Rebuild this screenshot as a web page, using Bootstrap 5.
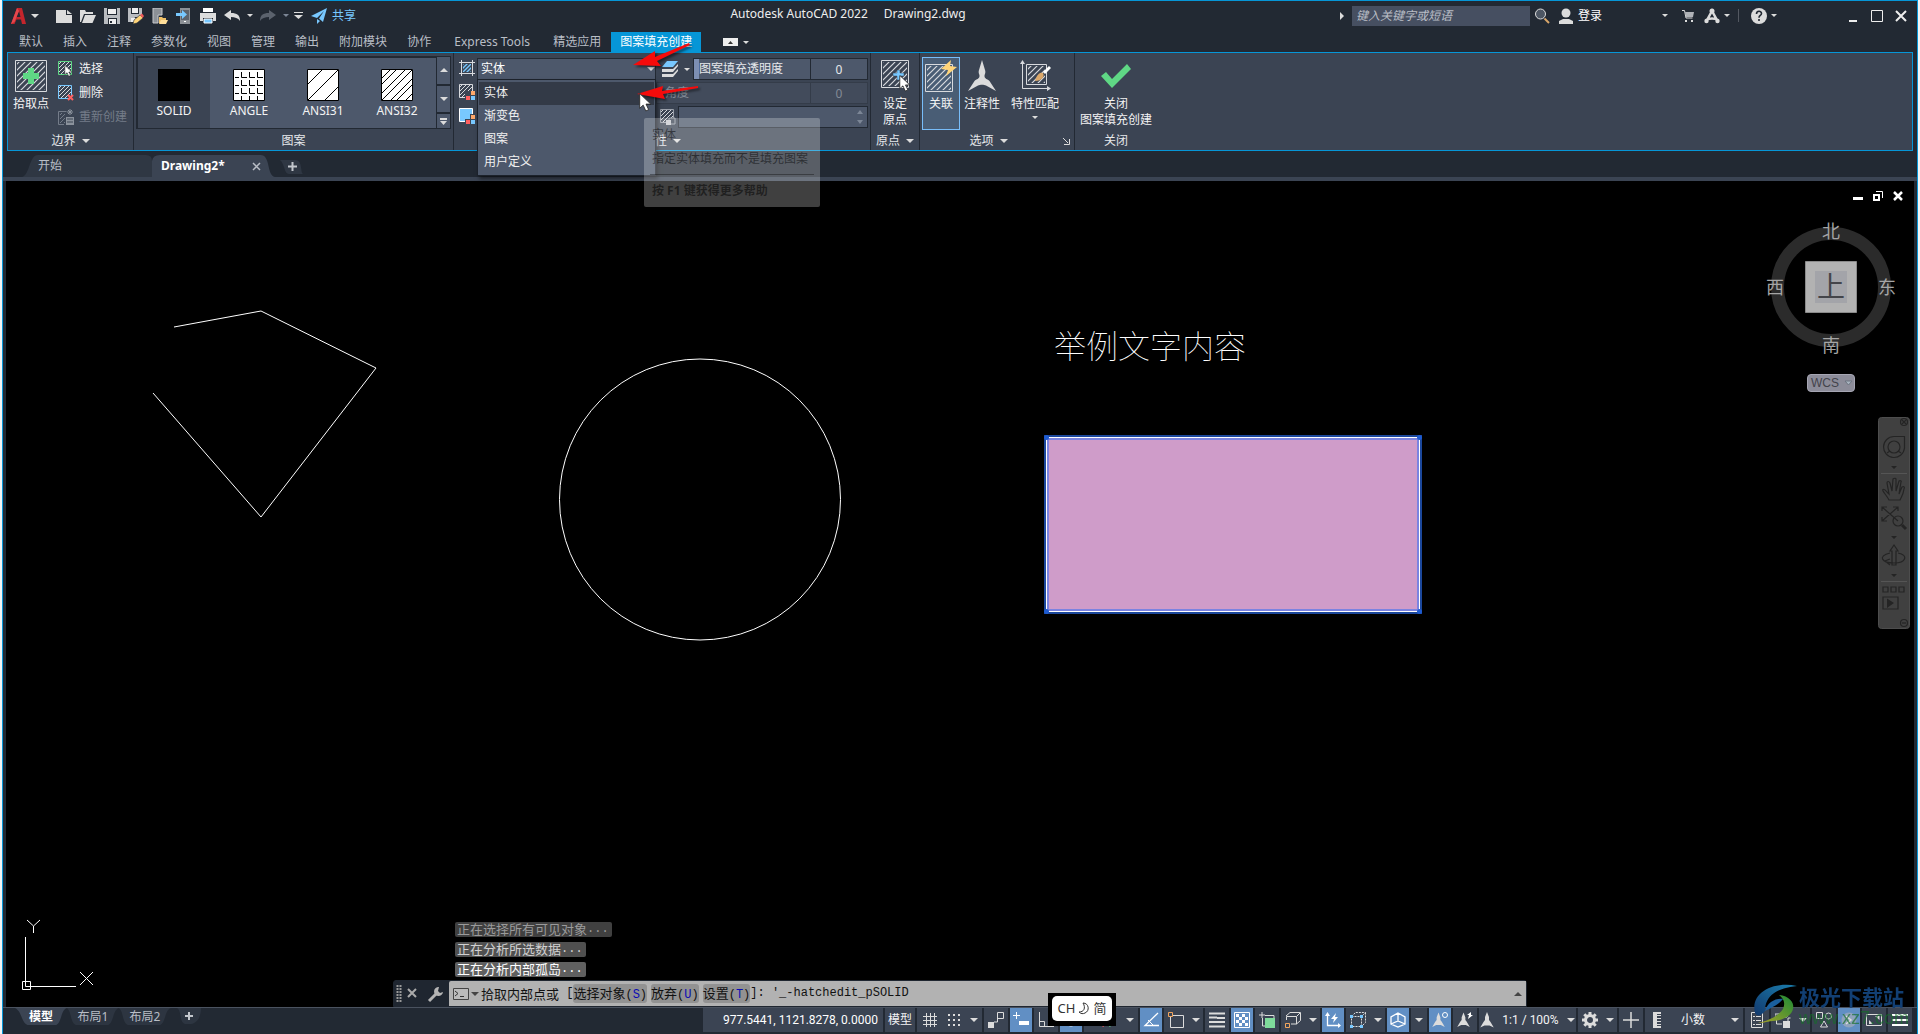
<!DOCTYPE html>
<html lang="zh-CN">
<head>
<meta charset="utf-8">
<meta name="viewport" content="width=device-width, initial-scale=1">
<title>Autodesk AutoCAD 2022 - Drawing2.dwg</title>
<link href="https://cdn.jsdelivr.net/npm/bootstrap@5.3.0/dist/css/bootstrap.min.css" rel="stylesheet">
<style>
:root{--chrome:#222933;--panel:#3b4453;--field:#4d586b;--blue:#0696d7;--ink:#e6e8eb;--edge:#222933}
html,body{height:100%}
body{background:#f3f5f6;color:var(--ink);font:12px/16px "Noto Sans","Noto Sans CJK SC",sans-serif;overflow:hidden}
svg{display:block;flex:none}
button,input,select{font:inherit;color:inherit;background:none;border:0;padding:0;margin:0;border-radius:0}
a{color:inherit;text-decoration:none}
.app{min-height:100vh;margin:0 2px;border:1px solid var(--blue);border-bottom:0;background:var(--chrome)}
.i16{width:16px;height:16px}.i28{width:28px;height:28px}.i32{width:32px;height:32px}.i12{width:12px;height:12px}
.tri{flex:none;width:0;height:0;border:4px solid transparent;border-top-color:#dcdcdc;border-bottom:0}
.tri-s{border-width:3px;border-bottom:0}
.tri-up{border-top:0;border-bottom:4px solid #dcdcdc}
.tri-dim{border-top-color:#7c8696}
.titlebar{height:29px}
.q{width:24px;height:24px;display:flex;align-items:center;justify-content:center}
.q-s{width:12px}
.app-title{font-size:12px;color:#eee;gap:16px;padding-bottom:3px}
.appmenu{width:49px}
.share{color:#78c8ff;gap:5px;padding-left:3px}
.find{width:178px;height:20px;background:#464f61;padding:0 4px;font-style:italic;color:#c3c7cd}
.find::placeholder{color:#b9bec6;opacity:1}
.login{width:114px}
.rtabs{height:22px;padding-left:6px}
.rtab{height:20px;padding:0 10px;color:#b9bec6;display:flex;align-items:center}
.rtab-w{width:102px}
.rtab.on{background:var(--blue);color:#fff;padding:0 9px}
.collapse-btn{width:15px;height:8px;background:#eee;margin:0 5px 0 22px}
.ribbon{margin:0 4px;border:1px solid var(--blue);background:var(--panel);height:99px}
.pane{border-right:1px solid var(--edge)}
.pane-body{height:79px;padding-top:4px}
.pane-title{height:18px;gap:6px}
.p-edge{width:126px}.p-pat{width:320px}.p-prop{width:417px}.p-org{width:49px}.p-opt{width:155px}.p-end{width:82px}
.p-opt .pane-body{padding-left:2px}
.bigb{display:flex;flex-direction:column;align-items:center;padding-top:3px;width:46px;color:#f3f3f3;white-space:nowrap;height:73px}
.bigb svg{margin-bottom:4px;height:32px}
.bigb.on{background:#495d75;border:1px solid #78bdf9;width:38px;padding-top:2px}
.smallb{display:flex;align-items:center;height:24px;gap:5px;color:#f3f3f3}
.smallb:disabled{color:#747c89}
.gal{background:var(--field);border:1px solid var(--edge);border-width:2px 1px 1px 2px;height:73px}
.gal button{width:74px;height:70px;color:#f3f3f3;display:flex;flex-direction:column;align-items:center;padding-top:11px;gap:2px}
.gal button.on{background:var(--panel);width:72px;margin-right:2px}
.galnav{width:14px;height:73px;border:1px solid var(--edge);border-left:0;gap:2px;background:var(--edge)}
.galnav button{background:var(--field);display:flex;flex-direction:column;align-items:center;justify-content:center}
.fld{background:var(--field);border:1px solid var(--edge);height:22px}
.fld select,.fld input{width:100%;height:20px;outline:0}
.fld select{appearance:none;padding-left:3px;color:#fff}
.fld.off{background:#424b5b;color:#828a96;border-color:#343c49}
.fld.num{width:57px;border-left:0}
.grab{width:5px;height:20px;background:#7d8fb3}
.layerb{width:37px;padding-left:6px;gap:6px}
.drop{left:23px;top:26px;width:179px;background:var(--field);border:1px solid #1c222b;z-index:5;padding:2px 1px 1px;box-shadow:2px 3px 4px rgba(0,0,0,.5);margin:0;list-style:none}
.drop button{display:block;width:100%;height:23px;text-align:left;padding:0 0 2px 5px;color:#f1f1f1}
.drop .on{background:#333a47}
.tip{left:190px;top:65px;width:176px;height:89px;background:rgba(255,255,255,.25);border-radius:2px;z-index:6;padding:9px 6px 0 8px;color:rgba(0,0,0,.5)}
.tip hr{margin:7px 0 8px -2px;border-color:#000;opacity:.35}
.over{z-index:7;left:170px;top:-20px}
.ftabs{height:26px;padding:4px 0 0 19px}
.ftab{position:relative;height:22px;display:flex;align-items:center;color:#b9bec6}
.ftab>svg.shape{position:absolute;left:0;top:0;width:100%;height:100%}
.ftab span{position:relative}
.strip{height:4px;background:var(--panel)}
.model{margin:0 3px;background:#000;overflow:hidden}
.cadtext{font:100 32px "Noto Sans CJK SC",sans-serif;fill:#fff}
.mdi{right:11px;top:10px;gap:10px}
.cube{right:17px;top:36px;width:132px;height:140px}
.cube text{font:18px "Noto Sans CJK SC",sans-serif;fill:#a5a5a5;text-anchor:middle}
.wcs{right:59px;top:193px;width:48px;height:18px;background:#8c8c99;border:1px solid #a6a6b3;border-radius:4px;font:12px/14px "Liberation Sans",sans-serif;color:#43434b;gap:5px;padding-left:3px}
.navb{right:4px;top:236px;width:32px;height:212px}
.cmd{left:387px;right:387px;bottom:0}
.hist{padding-left:62px;font-size:13px;line-height:15px;gap:5px}
.hist div{height:15px;border-radius:2px;padding:0 3px 0 2px;white-space:pre;display:flex;align-items:center}
.hist i,.cmdline i{font:12px/15px "Liberation Mono","Noto Sans CJK SC",monospace}
.h1c{background:#404040;color:#9a9a9a}.h2c{background:#505050;color:#d0d0d0}.h3c{background:#606060;color:#fff}
.cmdbar{height:27px;background:#1f2630;border:1px solid #1f2630;border-radius:3px 3px 0 0;margin-top:3px}
.cmdline{background:#b2b2b2;color:#111;font-size:13px;white-space:pre;padding-left:4px;border-radius:2px 0 0 0}
.cmdline button{background:#929292;border-radius:3px;line-height:18px}
.cmdline b{color:#0b0bb4;font-weight:400}
.cmdline .tri{border-top-color:#444;margin:0 2px}
.cmdline .tri-up{border-top:0;border-bottom-color:#444}
.status{border-top:1px solid #4a525f;height:27px}
.lays{padding-left:12px}
.lay{position:relative;width:52px;height:17px;color:#b9bec6}
.lay svg{position:absolute;inset:0}
.lay span{position:relative}
.tray{gap:2px;height:24px;padding-right:5px}
.s{flex:none;background:var(--panel);height:24px;width:24px;display:flex;align-items:center;justify-content:center;gap:8px;color:#f3f3f3;white-space:nowrap}
.s.on{background:#618fc4;width:22px}
.s.coord{width:180px;justify-content:flex-end;font:12px "Roboto","Noto Sans",sans-serif;color:#fff;padding-right:5px}
.s.w-txt{width:30px}
.s.w-grid{width:65px}
.s.w-snap{width:54px}
.s.w-pair{width:39px}
.s.w-caret{width:16px}
.s.w-scale{width:97px;font-family:"Roboto","Noto Sans",sans-serif}
.s.w-unit{width:98px;padding:0 4px 0 8px;gap:20px;justify-content:flex-start}
.ime{left:1048px;bottom:8px;background:#000;padding:3px 4px 5px;z-index:9}
.ime div{background:#fff;border-radius:5px;width:60px;height:25px;color:#333;font:13px/25px "Noto Sans","Noto Sans CJK SC",sans-serif;gap:3px}
.wm{right:11px;bottom:7px;z-index:10}
.wm-a{font:700 21px/26px "Noto Sans CJK SC",sans-serif;color:#123f73}
.wm-b{font:18px/18px "Liberation Sans",sans-serif;color:rgba(20,110,40,.65)}
</style>
<script src="https://cdn.jsdelivr.net/npm/bootstrap@5.3.0/dist/js/bootstrap.bundle.min.js"></script>
</head>
<body>
<svg width="0" height="0" class="position-absolute" aria-hidden="true">
<defs>
<pattern id="hp" width="4" height="4" patternUnits="userSpaceOnUse"><path d="M-1 1l2-2M0 4l4-4M3 5l2-2" stroke="#d8dade" stroke-width="1"/></pattern>
<pattern id="hb" width="4" height="4" patternUnits="userSpaceOnUse"><path d="M-1 1l2-2M0 4l4-4M3 5l2-2" stroke="#78c8ff" stroke-width="1.4"/></pattern>
<pattern id="hg" width="4" height="4" patternUnits="userSpaceOnUse"><path d="M-1 1l2-2M0 4l4-4M3 5l2-2" stroke="#747c89" stroke-width="1"/></pattern>
<pattern id="hl" width="6" height="6" patternUnits="userSpaceOnUse"><path d="M-1 1l2-2M0 6l6-6M5 7l2-2" stroke="#d8dade" stroke-width="1.200"/></pattern>
<symbol id="cur" viewBox="0 0 12 18"><path d="M.5.500v14l3.300-3 2.500 5.500 2.700-1.200-2.500-5.300h4.500z" fill="#fff" stroke="#222" stroke-width=".8"/></symbol>
<symbol id="ann" viewBox="0 0 28 32"><path d="M14 0l3 10c1 3-.5 4-.5 6 0 3 3 3 5 5l6.500 10-10-5.500c-2-1-6-1-8 0L0 31l6.500-10c2-2 5-2 5-5 0-2-1.500-3-.5-6z" fill="#dcdcdc"/></symbol>
<symbol id="annw" viewBox="0 0 28 32"><path d="M14 0l4 10v6l3 4 6.500 11-8.500-4h-10L.5 31 7 20l3-4v-6z" fill="#dcdcdc"/></symbol>
</defs>
</svg>

<div class="app d-flex flex-column">
<header class="titlebar d-flex align-items-center">
  <button class="appmenu d-flex align-items-center ps-2 gap-1" aria-label="应用程序菜单"><svg class="i16" viewBox="0 0 16 16"><path d="M0 16L6 0h5l4 16h-4l-1-4.500H5.500L3.500 16z" fill="#c4252c"/><path d="M8 3l1.500 6H5.500z" fill="#222933"/><path d="M6 0L0 16l3.500-2L8 3z" fill="#e5484d"/></svg><span class="tri"></span></button>
  <button class="q" aria-label="新建"><svg class="i16" viewBox="0 0 16 16"><path d="M0 2h10v5h6v8H0z" fill="#dcdcdc"/><path d="M11 2l5 4h-5z" fill="#dcdcdc"/></svg></button>
  <button class="q" aria-label="打开"><svg class="i16" viewBox="0 0 16 16"><path d="M0 2h5l1 2h7v2H4L1 14H0z" fill="#dcdcdc"/><path d="M5 7h11l-3.500 8H2z" fill="#dcdcdc"/></svg></button>
  <button class="q" aria-label="保存"><svg class="i16" viewBox="0 0 16 16"><path d="M0 0h16v16H0z" fill="#b9bcc0"/><path d="M3 0h10v7H3zM4 10h9v6H4z" fill="#222933"/><path d="M4 1h8v5H4zM5 11h7v5H5z" fill="#eee"/><path d="M6 13h2v2H6z" fill="#222933"/></svg></button>
  <button class="q" aria-label="另存为"><svg class="i16" viewBox="0 0 16 16"><path d="M0 0h14v9H7l-2 5H0z" fill="#b9bcc0"/><path d="M3 0h8v6H3z" fill="#222933"/><path d="M4 0h6v5H4zM3 10h5l-2 4H3z" fill="#eee"/><path d="M6 12l6-5 3 3-6 5-4 1z" fill="#ffd479" stroke="#222933" stroke-width=".6"/><path d="M12 7l2-1.500 2 2.500-1.500 2z" fill="#f45b5b"/></svg></button>
  <button class="q" aria-label="从移动设备打开"><svg class="i16" viewBox="0 0 16 16"><path d="M1 0h9v7H6v8H1z" fill="#8c9096" stroke="#c8cacd"/><path d="M7 9h3l1 1h3v5H7z" fill="#f0c067"/><path d="M9 12h7l-2 4H7z" fill="#ffdf9a"/></svg></button>
  <button class="q" aria-label="保存到移动设备"><svg class="i16" viewBox="0 0 16 16"><path d="M4 0h10v16H4z" fill="#8c9096"/><path d="M5 2h8v10H5z" fill="#5c626c"/><path d="M0 5h6V2l5 4.500L6 11V8H0z" fill="#78c8ff"/><path d="M8 13h2v1H8z" fill="#fff"/></svg></button>
  <button class="q" aria-label="打印"><svg class="i16" viewBox="0 0 16 16"><path d="M3 0h10v4H3z" fill="#fff"/><path d="M0 5h16v8h-3v-3H3v3H0z" fill="#dcdcdc"/><path d="M4 11h8v4H4z" fill="#78c8ff" stroke="#fff"/></svg></button>
  <button class="q" aria-label="放弃"><svg class="i16" viewBox="0 0 16 16"><path d="M0 7l7-5v3c6 0 9 2 9 8-2-3-5-4-9-4v3z" fill="#dcdcdc"/></svg></button>
  <button class="q q-s" aria-label="放弃列表"><span class="tri tri-s"></span></button>
  <button class="q" aria-label="重做"><svg class="i16" viewBox="0 0 16 16"><path d="M16 7L9 2v3C3 5 0 7 0 13c2-3 5-4 9-4v3z" fill="#5b626d"/></svg></button>
  <button class="q q-s" aria-label="重做列表"><span class="tri tri-s tri-dim"></span></button>
  <button class="q q-s" aria-label="自定义"><svg width="9" height="7" viewBox="0 0 9 7"><path d="M0 0h9v1H0zM0 3h9L4.500 7z" fill="#dcdcdc"/></svg></button>
  <button class="share d-flex align-items-center ms-1"><svg class="i16" viewBox="0 0 16 16"><path d="M0 8L16 0l-4 14-4-3.500 5-7.500-7 7z" fill="#78c8ff"/><path d="M6 11l3 2-3 3z" fill="#78c8ff"/></svg>共享</button>
  <div class="app-title flex-grow-1 d-flex justify-content-center"><span>Autodesk AutoCAD 2022</span><span>Drawing2.dwg</span></div>
  <svg class="me-2" width="4" height="8"><path d="M0 0l4 4-4 4z" fill="#dcdcdc"/></svg>
  <input class="find" type="text" placeholder="键入关键字或短语" aria-label="搜索">
  <button class="q" aria-label="查找"><svg class="i16" viewBox="0 0 16 16"><circle cx="6.500" cy="6" r="5" fill="#4d5663" stroke="#dcdcdc"/><path d="M10.500 10.500L15 15" stroke="#d9a66a" stroke-width="2"/></svg></button>
  <button class="login d-flex align-items-center gap-1 ps-1"><svg class="i16" viewBox="0 0 16 16"><circle cx="8" cy="5" r="4.500" fill="#dcdcdc"/><path d="M1 16v-3l4-2h6l4 2v3z" fill="#dcdcdc"/></svg><span class="text-white flex-grow-1 text-start">登录</span><span class="tri tri-s"></span></button>
  <button class="q ms-2" aria-label="应用商店"><svg class="i12" viewBox="0 0 12 12"><path d="M0 .5h2.500L4 8h6.500" stroke="#dcdcdc" fill="none"/><path d="M3 2h9l-1 5H4z" fill="#b0b3b8"/><path d="M3 10h2v2H3zM9 10h2v2H9z" fill="#dcdcdc"/></svg></button>
  <button class="q" aria-label="Autodesk App"><svg class="i16" viewBox="0 0 16 16"><path d="M2.500 13L8 3l5.500 10M2 12c4-2 8-2 12 0" stroke="#dcdcdc" stroke-width="2.500" fill="none"/><circle cx="2.500" cy="13" r="2.200" fill="#dcdcdc"/><circle cx="13.500" cy="13" r="2.200" fill="#dcdcdc"/><circle cx="8" cy="3" r="2.500" fill="#dcdcdc"/></svg></button>
  <span class="tri tri-s"></span><span class="vr ms-2 me-2 my-2"></span>
  <button class="q" aria-label="帮助"><svg class="i16" viewBox="0 0 16 16"><circle cx="8" cy="8" r="8" fill="#dcdcdc"/><path d="M5.500 6c0-3.500 5-3.500 5-.5 0 2-2.500 2-2.500 4.200M8 11v2" stroke="#222933" stroke-width="1.600" fill="none"/></svg></button>
  <span class="tri tri-s me-5"></span>
  <button class="q ms-3" aria-label="最小化"><svg class="i12" viewBox="0 0 12 12"><path d="M2 10h8v2H2z" fill="#eee"/></svg></button>
  <button class="q" aria-label="最大化"><svg class="i12" viewBox="0 0 12 12"><path d="M.5.500h11v11H.5z" stroke="#eee" fill="none"/></svg></button>
  <button class="q me-1" aria-label="关闭"><svg class="i12" viewBox="0 0 12 12"><path d="M1 1l10 10M11 1L1 11" stroke="#eee" stroke-width="2"/></svg></button>
</header>

<nav class="rtabs d-flex align-items-end" aria-label="功能区选项卡">
  <a class="rtab" href="#">默认</a><a class="rtab" href="#">插入</a><a class="rtab" href="#">注释</a><a class="rtab" href="#">参数化</a><a class="rtab" href="#">视图</a><a class="rtab" href="#">管理</a><a class="rtab" href="#">输出</a><a class="rtab" href="#">附加模块</a><a class="rtab" href="#">协作</a><a class="rtab rtab-w justify-content-center" href="#">Express Tools</a><a class="rtab" href="#">精选应用</a><a class="rtab on" href="#">图案填充创建</a>
  <div class="d-flex align-items-center" style="height:20px"><button class="collapse-btn d-flex align-items-center justify-content-center" aria-label="折叠功能区"><svg width="5" height="3"><path d="M0 3l2.500-3L5 3z" fill="#333"/></svg></button><span class="tri tri-s"></span></div>
</nav>

<section class="ribbon d-flex" aria-label="图案填充创建">
  <div class="pane p-edge">
    <div class="pane-body d-flex">
      <button class="bigb"><svg class="i32" viewBox="0 0 32 32"><path d="M.5.500h31v31H.5z" fill="none" stroke="#d8dade"/><path d="M2 2h28v28H2z" fill="url(#hl)"/><path d="M13 8h6v5h5v6h-5v5h-6v-5H8v-6h5z" fill="#5fd885"/></svg>拾取点</button>
      <div class="ps-1">
        <button class="smallb"><svg class="i16" viewBox="0 0 16 16"><path d="M.5.500h13v13H.5z" fill="url(#hp)" stroke="#5fd885"/><use href="#cur" x="6" y="4" width="9" height="12"/></svg>选择</button>
        <button class="smallb"><svg class="i16" viewBox="0 0 16 16"><path d="M.5.500h13v13H.5z" fill="url(#hp)" stroke="#78c8ff"/><path d="M10 10l5 5M15 10l-5 5" stroke="#ff5f5f" stroke-width="2"/></svg>删除</button>
        <button class="smallb" disabled><svg class="i16" viewBox="0 0 16 16"><path d="M.5 2.500h8M.5 2.500v13H6" fill="none" stroke="#747c89"/><path d="M2 4h5v10H2z" fill="url(#hg)"/><path d="M8 8h8v8H8z" fill="#8b929c"/><path d="M9 10h6M9 13h6" stroke="#3b4453"/><path d="M12 0v6M9 3h6M10 1l4 4M14 1l-4 4" stroke="#8b929c"/></svg>重新创建</button>
      </div>
    </div>
    <div class="pane-title d-flex align-items-center justify-content-center">边界<span class="tri"></span></div>
  </div>

  <div class="pane p-pat">
    <div class="pane-body d-flex" style="padding:3px 2px 0">
      <div class="gal d-flex flex-grow-1">
        <button class="on"><svg class="i32"><path d="M0 0h32v32H0z"/></svg>SOLID</button>
        <button><svg class="i32" viewBox="0 0 32 32"><path d="M.5.500h31v31H.5z" fill="#fff" stroke="#000"/><path d="M2 8.500h4M8.500 3v5.500H14M16.500 3v5.500H22M24.500 3v5.500H30M2 16.500h4M8.500 11v5.500H14M16.500 11v5.500H22M24.500 11v5.500H30M2 24.500h4M8.500 19v5.500H14M16.500 19v5.500H22M24.500 19v5.500H30M8.500 27v4M16.500 27v4M24.500 27v4" fill="none" stroke="#000"/></svg>ANGLE</button>
        <button><svg class="i32" viewBox="0 0 32 32"><path d="M.5.500h31v31H.5z" fill="#fff" stroke="#000"/><path d="M1 15L15 1M1 31L31 1M18 31l13-13" stroke="#000"/></svg>ANSI31</button>
        <button><svg class="i32" viewBox="0 0 32 32"><path d="M.5.500h31v31H.5z" fill="#fff" stroke="#000"/><path d="M1 9l8-8M1 15L15 1M1 24L24 1M1 31L31 1M10 31l21-21M16 31l15-15M25 31l6-6" stroke="#000"/></svg>ANSI32</button>
      </div>
      <div class="galnav d-flex flex-column">
        <button class="flex-grow-1" aria-label="上一行"><span class="tri tri-up"></span></button>
        <button class="flex-grow-1" aria-label="下一行"><span class="tri"></span></button>
        <button style="height:14px" aria-label="更多图案"><svg width="7" height="7"><path d="M0 0h7v2H0zM0 3h7L3.500 7z" fill="#dcdcdc"/></svg></button>
      </div>
    </div>
    <div class="pane-title d-flex align-items-center justify-content-center">图案</div>
  </div>

  <div class="pane p-prop position-relative">
    <div class="pane-body d-flex">
      <div class="d-flex flex-column" style="padding:3px 2px 0 5px;gap:8px">
        <svg class="i16" viewBox="0 0 16 16"><path d="M2.500 0v16M13.500 0v16M0 2.500h16M0 13.500h16" stroke="#d8dade"/><path d="M4 4h8v8H4z" fill="url(#hb)"/></svg>
        <svg class="i16" viewBox="0 0 16 16"><path d="M.5.500h13v13H.5z" fill="url(#hp)" stroke="#d8dade"/><path d="M6 7h10v9H6z" fill="#3b4453"/><path d="M12 7h4v4h-4z" fill="#ffa869"/><path d="M7 12h4v4H7z" fill="#ff5f5f"/><path d="M12 12h4v4h-4z" fill="#78c8ff"/></svg>
        <svg class="i16" viewBox="0 0 16 16"><path d="M.5.500h13v13H.5z" fill="#78c8ff" stroke="#fff"/><path d="M11 6h5v10H6v-5h5z" fill="#3b4453"/><path d="M12 7h4v4h-4z" fill="#ffa869"/><path d="M7 12h4v4H7z" fill="#ff5f5f"/><path d="M12 12h4v4h-4z" fill="#78c8ff"/></svg>
      </div>
      <div style="width:179px;padding-top:1px">
        <div class="fld position-relative d-flex align-items-center"><select aria-label="图案填充类型"><option>实体</option><option>渐变色</option><option>图案</option><option>用户定义</option></select><span class="tri position-absolute end-0"></span></div>
      </div>
      <div class="flex-grow-1 d-flex flex-column" style="padding:1px 2px 0 0;gap:2px">
        <div class="d-flex"><button class="layerb d-flex align-items-center" aria-label="图层"><svg class="i16" viewBox="0 0 16 16"><path d="M5 0h11l-5 6H0z" fill="#78c8ff"/><path d="M0 8h11l5-5v2l-5 6H0zM0 13h11l5-5v2l-5 6H0z" fill="#dcdcdc"/></svg><span class="tri tri-s"></span></button>
          <label class="fld flex-grow-1 d-flex align-items-center" for="tr"><span class="grab"></span>图案填充透明度</label><div class="fld num"><input id="tr" class="text-center" value="0"></div></div>
        <div class="d-flex"><label class="fld off flex-grow-1 ps-2 d-flex align-items-center" for="an">角度</label><div class="fld off num"><input id="an" class="text-center" value="0" disabled></div></div>
        <div class="d-flex align-items-center" style="padding-left:4px;gap:2px"><svg class="i16" viewBox="0 0 16 16"><path d="M.5.500h13v13H.5z" fill="url(#hp)" stroke="#9aa0aa"/><path d="M9 9h6v6H9z" fill="#3b4453" stroke="#9aa0aa"/><path d="M6 11h5v5H6z" fill="#c4c7cc"/></svg><div class="fld flex-grow-1 d-flex align-items-center pe-1"><input aria-label="图案填充比例"><svg width="6" height="14"><path d="M0 4l3-4 3 4zM0 10l3 4 3-4z" fill="#7c8696"/></svg></div></div>
      </div>
    </div>
    <div class="pane-title d-flex align-items-center justify-content-center">特性<span class="tri"></span></div>
    <ul class="drop position-absolute"><li><button class="on">实体</button></li><li><button>渐变色</button></li><li><button>图案</button></li><li><button>用户定义</button></li></ul>
    <div class="tip position-absolute" role="tooltip">实体<div class="mt-2">指定实体填充而不是填充图案</div><hr><strong>按 F1 键获得更多帮助</strong></div>
    <svg class="over position-absolute" width="90" height="80" viewBox="0 0 90 80" aria-hidden="true">
      <g style="filter:drop-shadow(2px 2px 1px rgba(0,0,0,.5))" fill="#f50b0b"><path d="M9 32l22-14 0 6L65 10l1 2L33 28l4 5z"/><path d="M13 61l26-8-1 5 36-5v2l-35 6 2 5z"/></g>
      <use href="#cur" x="15" y="60" width="13" height="19"/>
    </svg>
  </div>

  <div class="pane p-org">
    <div class="pane-body"><button class="bigb mx-auto"><svg class="i32" viewBox="0 0 32 32"><path d="M2.500.500h27v27h-27z" fill="none" stroke="#d8dade"/><path d="M4 2h24v24H4z" fill="url(#hl)"/><path d="M18 10h3v3h4v3h-4v4h-3v-4h-4v-3h4z" fill="#78c8ff" stroke="#3b4453" stroke-width=".5"/><use href="#cur" x="20" y="15" width="12" height="17"/></svg>设定<br>原点</button></div>
    <div class="pane-title d-flex align-items-center justify-content-center">原点<span class="tri"></span></div>
  </div>

  <div class="pane p-opt">
    <div class="pane-body d-flex">
      <button class="bigb on"><svg class="i32" viewBox="0 0 32 32"><path d="M.5 4.500h27v27H.5z" fill="none" stroke="#d8dade"/><path d="M2 6h24v24H2z" fill="url(#hl)"/><path d="M26 0L16 9l7 1-2 6 11-9-7-1z" fill="#ffd479"/></svg>关联</button>
      <button class="bigb" style="width:44px"><svg class="i28" viewBox="0 0 28 32"><use href="#ann"/></svg>注释性</button>
      <button class="bigb flex-grow-1 pe-2"><svg class="i32" viewBox="0 0 32 32"><path d="M3.500 2v26.500H30" stroke="#d8dade" fill="none"/><path d="M1 4l2.500-4L6 4zM28 26l4 2.500-4 2.500z" fill="#d8dade"/><path d="M7.500 4.500h20v20h-20z" fill="none" stroke="#d8dade"/><path d="M9 6h17v17H9z" fill="url(#hl)"/><path d="M16 21c2-7 5-9 8-8 2 3-1 8-8 8z" fill="#dca96b"/><path d="M24 12l6-6 2 2-6 6z" fill="#fff"/></svg>特性匹配<span class="tri tri-s mt-1"></span></button>
    </div>
    <div class="pane-title d-flex align-items-center"><span class="flex-grow-1"></span><span>选项</span><span class="tri"></span><span class="flex-grow-1"></span><button class="me-1" aria-label="选项设置"><svg width="7" height="7"><path d="M0 0l5 5M6.500 1v5.500H1" stroke="#dcdcdc" fill="none"/></svg></button></div>
  </div>

  <div class="p-end">
    <div class="pane-body"><button class="bigb mx-auto"><svg class="i32" viewBox="0 0 32 32"><path d="M1 16l5-4 6 7L27 4l4 5-19 19z" fill="#5fd885"/></svg>关闭<br>图案填充创建</button></div>
    <div class="pane-title d-flex align-items-center justify-content-center">关闭</div>
  </div>
</section>

<div class="ftabs d-flex">
  <button class="ftab" style="width:130px;padding-left:16px"><svg class="shape" viewBox="0 0 130 22" preserveAspectRatio="none"><path d="M0 22C8 20 7 0 16 0h108q6 0 6 6v16z" fill="#2f3743"/></svg><span>开始</span></button>
  <button class="ftab text-white" style="width:123px;padding-left:9px"><svg class="shape" viewBox="0 0 126 22" preserveAspectRatio="none"><path d="M0 22V6Q1 0 8 0h103c11 0 6 20 15 22z" fill="#3b4453"/></svg><span class="fw-bold">Drawing2*</span><svg class="position-relative ms-auto" style="margin-right:14px" width="9" height="9"><path d="M1 1l7 7M8 1L1 8" stroke="#b9bec6" stroke-width="1.500"/></svg></button>
  <button class="ftab ms-1 justify-content-center" style="width:26px" aria-label="新图形"><svg class="shape" viewBox="0 0 26 22"><path d="M1 5h15c8 0 5 12 8 14H10C5 19 6 9 1 5z" fill="#2f3743"/></svg><svg class="position-relative" width="9" height="9"><path d="M3.500 0h2v3.500H9v2H5.500V9h-2V5.500H0v-2h3.500z" fill="#c3c7cd"/></svg></button>
</div>
<div class="strip"></div>

<main class="model flex-grow-1 position-relative">
  <svg class="position-absolute top-0 start-0 w-100 h-100" role="img" aria-label="图形">
    <g transform="translate(-6 -181)" fill="none" stroke="#fff">
      <path d="M174 327l87-16 115 57-115 149-108-124"/>
      <circle cx="700" cy="499.500" r="140.500"/>
      <path d="M1046.500 437.500h373v174h-373z" fill="#cf9cc9"/>
      <path d="M1045.500 436.500h375v176h-375z" stroke="#1b479b" stroke-width="3"/>
      <path d="M1048 439h370v171h-370z" stroke="#7b83e0" stroke-width="2"/>
      <path d="M1046.500 437.500h373v174h-373z"/>
      <g fill="#1e5bd0" stroke="none"><circle cx="1046.500" cy="437.500" r="2.500"/><circle cx="1419.500" cy="437.500" r="2.500"/><circle cx="1046.500" cy="611.500" r="2.500"/><circle cx="1419.500" cy="611.500" r="2.500"/></g>
      <text class="cadtext" x="1054" y="358" stroke="none">举例文字内容</text>
    </g>
  </svg>
  <svg class="position-absolute bottom-0 start-0" width="100" height="100" aria-label="UCS"><g transform="translate(-6 -907)" stroke="#fff" fill="none"><path d="M25.500 937v49.500H76M22.500 981.500h8v8h-8zM27 920l6.500 6 6.500-6M33.500 926v7M80 972l13 13M93 972l-13 13"/></g></svg>

  <div class="mdi position-absolute d-flex align-items-end">
    <button aria-label="最小化图形"><svg width="10" height="10"><path d="M0 6h10v3H0z" fill="#fff"/></svg></button>
    <button aria-label="还原图形"><svg width="10" height="10"><path d="M1 4h5v5H1z" stroke="#fff" stroke-width="2" fill="none"/><path d="M3 .5h6.500V7" stroke="#fff" fill="none"/></svg></button>
    <button aria-label="关闭图形"><svg width="10" height="10"><path d="M1 1l8 8M9 1L1 9" stroke="#fff" stroke-width="2.500"/></svg></button>
  </div>

  <svg class="cube position-absolute" viewBox="0 0 132 140" aria-label="ViewCube">
    <circle cx="66" cy="70" r="53.500" fill="none" stroke="#2b2b2b" stroke-width="13"/>
    <path d="M40.500 44.500h51v51h-51z" fill="#b2b2b2" stroke="#8a8a8a"/><path d="M50 54h32v32H50z" fill="#a3a4a9"/>
    <text x="66" y="21">北</text><text x="10" y="77">西</text><text x="122" y="77">东</text><text x="66" y="135">南</text>
    <text x="66" y="80" style="font-size:28px;fill:#44454a">上</text>
  </svg>
  <button class="wcs position-absolute d-flex align-items-center">WCS<svg width="9" height="6"><path d="M1 1h7L4.500 5z" fill="#a8b4c0" stroke="#6d7480"/></svg></button>

  <svg class="navb position-absolute" viewBox="0 0 32 212" aria-label="导航栏"><rect x=".5" y=".5" width="31" height="211" rx="3" fill="#404040" stroke="#4d4d4d"/><path d="M3 56.500h26M3 164.500h26" stroke="#555"/>
    <g fill="none" stroke="#242424" stroke-width="1.200"><circle cx="26" cy="5" r="3.500"/><path d="M24 3l4 4M28 3l-4 4"/><path d="M16 19.500h10.500V31A10.500 10.500 0 1 1 16 19.500z"/><circle cx="16" cy="30" r="6"/><path d="M9 36l3-2M23 36l-3-2"/>
    <path d="M11 83c-2-4-5-7-6-9s1-3 4 1l2 2-2-11c0-2 2-2 3 0l2 8 1-12c1-1 3-1 3 0v12l3-10c1-1 3 0 2 1l-2 12 3-7c2-1 3 0 2 2-1 7-3 8-4 11z"/>
    <path d="M4 90l16 14M20 90L4 104M4 94v-4h5M15 90h5v4M4 100v4h5"/><circle cx="20" cy="104" r="5"/><path d="M24 108l4 4" stroke-width="3"/>
    <path d="M14 148v-14h-2l4-6 4 6h-2v14z"/><path d="M12 136c-13 3-8 10 4 10s15-8 4-10M12 142l-5 2 5 4"/>
    <path d="M5 170h5v5H5zM13 170h5v5h-5zM21 170h5v5h-5zM5 180h15v12H5z"/><circle cx="26" cy="206" r="3.500"/><path d="M24 206h4"/></g>
    <path d="M9 181.500l7 4.500-7 5zM13 49h6l-3 3zM13 119h6l-3 3zM13 157h6l-3 3z" fill="#242424"/></svg>

  <div class="cmd position-absolute">
    <div class="hist d-flex flex-column align-items-start"><div class="h1c">正在选择所有可见对象<i>...</i></div><div class="h2c">正在分析所选数据<i>...</i></div><div class="h3c">正在分析内部孤岛<i>...</i></div></div>
    <div class="cmdbar d-flex">
      <svg width="55" height="25" viewBox="0 0 55 25"><path d="M3.500 4v17M6.500 4v17" stroke="#999" stroke-width="2" stroke-dasharray="2 1"/><path d="M14 8l8 8M22 8l-8 8" stroke="#aaa" stroke-width="2"/><path d="M35 20l8-8" stroke="#b5b5b5" stroke-width="3"/><path d="M45 6a4.500 4.500 0 1 0 4 5l-3 1-2-2z" fill="#b5b5b5"/></svg>
      <div class="cmdline flex-grow-1 d-flex align-items-center"><svg width="16" height="12" viewBox="0 0 16 12"><path d="M.5.500h15v11H.5z" fill="#bbb" stroke="#444"/><path d="M2 3l3 2.500L2 8M7 8.500h4" stroke="#333" fill="none"/></svg><span class="tri"></span>拾取内部点或<i> [</i><button>选择对象<i>(<b>S</b>)</i></button><i class="ms-1"></i><button>放弃<i>(<b>U</b>)</i></button><i class="ms-1"></i><button>设置<i>(<b>T</b>)</i></button><i>]: '_-hatchedit_pSOLID</i><span class="tri tri-up ms-auto me-1"></span></div>
    </div>
  </div>
</main>

<footer class="status d-flex">
  <div class="lays d-flex">
    <button class="lay text-white fw-bold"><svg viewBox="0 0 54 18"><path d="M0 0h54c-7 2-5 16-12 18H14C6 16 8 4 0 0z" fill="#3b4453"/></svg><span>模型</span></button>
    <button class="lay"><svg viewBox="0 0 54 18"><path d="M0 0h54c-7 2-5 16-12 18H10C3 16 5 4 0 0z" fill="#2d3541"/></svg><span>布局1</span></button>
    <button class="lay"><svg viewBox="0 0 54 18"><path d="M0 0h54c-7 2-5 16-12 18H10C3 16 5 4 0 0z" fill="#2d3541"/></svg><span>布局2</span></button>
    <button class="lay" aria-label="新布局"><svg width="34" height="18"><path d="M6 0h24c0 8-3 15-10 16h-6C8 14 11 3 6 0z" fill="#2d3541"/><path d="M17 4h2v3h3v2h-3v3h-2V9h-3V7h3z" fill="#c3c7cd"/></svg></button>
  </div>
  <div class="tray d-flex ms-auto">
    <button class="s coord">977.5441, 1121.8278, 0.0000</button>
    <button class="s w-txt">模型</button>
    <div class="s w-grid"><svg class="i16" viewBox="0 0 16 16"><path d="M4.500 1v14M8.500 1v14M12.500 1v14M1 4.500h14M1 8.500h14M1 12.500h14" stroke="#dcdcdc"/></svg><svg class="i16" viewBox="0 0 16 16"><path d="M2 3h12M2 8h12M2 13h12" stroke="#dcdcdc" stroke-width="2" stroke-dasharray="2 3"/></svg><span class="tri"></span></div>
    <button class="s" aria-label="推断约束"><svg class="i16" viewBox="0 0 16 16"><path d="M0 10h6v6H0z" fill="#dcdcdc"/><path d="M9.500.500h6v6h-6zM9.500 5v5H6" stroke="#dcdcdc" fill="none"/></svg></button>
    <button class="s on" aria-label="动态输入"><svg class="i16" viewBox="0 0 16 16"><path d="M3.500 0v7M0 3.500h7" stroke="#fff"/><path d="M6 9h10v4H6z" fill="#fff"/></svg></button>
    <button class="s" aria-label="正交"><svg class="i16" viewBox="0 0 16 16"><path d="M1.500 0v14.500H16M1.500 9.500h5v5" stroke="#dcdcdc" fill="none"/></svg></button>
    <button class="s on" aria-label="极轴"><svg class="i16" viewBox="0 0 16 16"><circle cx="8" cy="9" r="5" stroke="#fff" fill="none"/></svg></button>
    <div class="s w-snap justify-content-end pe-1"><svg class="i16" viewBox="0 0 16 16"><path d="M1 15l2-9" stroke="#ff5f5f"/><path d="M8 15L6 6" stroke="#5fd885"/></svg><span class="tri"></span></div>
    <button class="s on" aria-label="对象捕捉追踪"><svg class="i16" viewBox="0 0 16 16"><path d="M15 1L2 13.500h14" stroke="#fff" fill="none" stroke-width="1.300"/><path d="M5 8l6 6" stroke="#fff"/></svg></button>
    <div class="s w-pair"><svg class="i16" viewBox="0 0 16 16"><path d="M2.500 3.500h13v12h-13z" stroke="#dcdcdc" fill="none"/><path d="M.5.500h4v4h-4z" fill="#3b4453" stroke="#f2a65e"/></svg><span class="tri"></span></div>
    <button class="s" aria-label="线宽"><svg class="i16" viewBox="0 0 16 16"><path d="M0 1.500h16M0 5.500h8M8 6h8M0 10h16M0 14.500h16" stroke="#dcdcdc" stroke-width="2"/></svg></button>
    <button class="s on" aria-label="透明度"><svg class="i16" viewBox="0 0 16 16"><path d="M.5.500h15v15H.5z" stroke="#fff" fill="none"/><path d="M2 2h3v3H2zM8 2h3v3H8zM5 5h3v3H5zM11 5h3v3h-3zM2 8h3v3H2zM8 8h3v3H8zM5 11h3v3H5zM11 11h3v3h-3z" fill="#fff"/></svg></button>
    <button class="s" aria-label="选择循环"><svg class="i16" viewBox="0 0 16 16"><path d="M3 0v6M0 3h6M3.500 6v8H6M6 3.500h9V6" stroke="#dcdcdc" fill="none"/><path d="M6 6h10v10H6z" fill="#7fdb9b"/></svg></button>
    <div class="s w-pair"><svg class="i16" viewBox="0 0 16 16"><path d="M1 4l4-3.500h10.500v8l-4 3.500H6M1.500 8V4.500h10V12M11.500 4.500L15 1" stroke="#dcdcdc" fill="none"/><path d="M.5 11.500h4v4h-4z" stroke="#f2a65e" fill="none"/></svg><span class="tri"></span></div>
    <button class="s on" aria-label="动态UCS"><svg class="i16" viewBox="0 0 16 16"><path d="M2.500 2v11.500H15" stroke="#fff" fill="none" stroke-width="1.300"/><path d="M0 4l2.500-4L5 4zM13 11l3 2.500-3 2.500zM11 1L6 7h3l-1 4 5-6h-3z" fill="#fff"/></svg></button>
    <div class="s w-pair"><svg class="i16" viewBox="0 0 16 16"><path d="M1.500 4.500h10v10h-10zM1.500 4.500l4-4h10l-4 4M15.500.500v10l-4 4" stroke="#dcdcdc" fill="none" stroke-dasharray="2 1"/><path d="M0 3h3v3H0zM10 3h3v3h-3zM0 13h3v3H0zM10 13h3v3h-3z" fill="#78c8ff"/></svg><span class="tri"></span></div>
    <button class="s on" aria-label="小控件"><svg class="i16" viewBox="0 0 16 16"><path d="M8 1l7 4v7l-7 3-7-3V5zM8 1v8M1 12l7-3 7 3" stroke="#fff" fill="none" stroke-width="1.300"/></svg></button>
    <button class="s w-caret" aria-label="小控件列表"><span class="tri"></span></button>
    <button class="s on" aria-label="注释可见性"><svg class="i16" viewBox="0 0 16 16"><use href="#annw" x="0" y="0" width="13" height="16"/><circle cx="13" cy="3" r="2.500" stroke="#fff" fill="none"/></svg></button>
    <button class="s" aria-label="自动缩放"><svg class="i16" viewBox="0 0 16 16"><use href="#annw" x="0" y="0" width="13" height="16"/><path d="M14 0l-4 3h2l-1 4 5-4h-2z" fill="#fff"/></svg></button>
    <button class="s w-scale"><svg width="14" height="16" viewBox="0 0 28 32"><use href="#annw"/></svg><span>1:1 / 100%</span><span class="tri"></span></button>
    <div class="s w-pair"><svg class="i16" viewBox="0 0 16 16"><circle cx="8" cy="8" r="4.500" stroke="#dcdcdc" stroke-width="3" fill="none"/><path d="M8 0v3M8 13v3M0 8h3M13 8h3M2.300 2.300l2.200 2.200M11.500 11.500l2.200 2.200M13.700 2.300l-2.200 2.200M4.500 11.500l-2.200 2.200" stroke="#dcdcdc" stroke-width="3"/></svg><span class="tri"></span></div>
    <button class="s" aria-label="注释监视器"><svg class="i16" viewBox="0 0 16 16"><path d="M8 0v16M0 8h16" stroke="#dcdcdc" stroke-width="1.500"/></svg></button>
    <div class="s w-unit"><svg width="8" height="16"><path d="M0 0h8v2H4v1h4v1H4v2h4v1H4v2h4v1H4v2h4v1H4v1h4v2H0z" fill="#dcdcdc"/></svg><span>小数</span><span class="tri ms-auto"></span></div>
    <button class="s" aria-label="快捷特性"><svg width="12" height="16"><path d="M.5.500h11v15H.5z" stroke="#dcdcdc" fill="none"/><path d="M2 4.500h2M5 4.500h5M2 8.500h2M5 8.500h5M2 12.500h2M5 12.500h5" stroke="#dcdcdc"/></svg></button>
    <div class="s w-pair"><svg class="i16" viewBox="0 0 16 16"><path d="M0 2h12v3H0zM1.500 5v7H7" stroke="#dcdcdc" fill="none"/><path d="M8 9h7v7H8z" fill="#dcdcdc"/><path d="M13 9V6h2.500" stroke="#dcdcdc" fill="none"/></svg><span class="tri"></span></div>
    <button class="s" aria-label="隔离对象"><svg class="i16" viewBox="0 0 16 16"><path d="M.5.500h6v6h-6zM8 9l3.500 6h-7z" stroke="#dcdcdc" fill="none"/><circle cx="12.500" cy="4" r="3" stroke="#dcdcdc" fill="none"/></svg></button>
    <button class="s on" aria-label="硬件加速"><svg class="i16" viewBox="0 0 16 16"><circle cx="8" cy="8" r="7.500" fill="#8fa3bd"/><path d="M5 4l5 4-5 4" stroke="#dcdcdc" fill="none" stroke-width="1.500"/></svg></button>
    <button class="s" aria-label="全屏显示"><svg class="i16" viewBox="0 0 16 16"><path d="M.5 2.500h15v11H.5z" stroke="#dcdcdc" fill="none"/><path d="M9 4h4.500v4zM3 8v4h4z" fill="#dcdcdc"/></svg></button>
    <button class="s" aria-label="自定义状态栏"><svg class="i16" viewBox="0 0 16 16"><path d="M0 3h16M0 8h16M0 13h16" stroke="#fff" stroke-width="2"/></svg></button>
  </div>
</footer>
</div>

<div class="ime position-fixed"><div class="d-flex align-items-center justify-content-center"><span>CH</span><svg width="12" height="14"><path d="M5 1c6 0 7 8 2 10-2 1-4 1-6-1 5 0 7-4 4-9z" fill="none" stroke="#333"/></svg><span>简</span></div></div>
<div class="wm position-fixed d-flex pe-none">
  <svg width="46" height="44" viewBox="0 0 46 44"><defs><linearGradient id="wb" x1="0" y1="1" x2="1" y2="0"><stop offset="0" stop-color="#12396e"/><stop offset="1" stop-color="#1b7fae"/></linearGradient><linearGradient id="wg" x1="0" y1="1" x2="1" y2="0"><stop offset="0" stop-color="#a9a32a"/><stop offset="1" stop-color="#1d8a35"/></linearGradient></defs><path d="M2 30C-3 10 20-2 44 3 25 5 12 12 12 28c-4 5-8 6-10 2z" fill="url(#wb)"/><path d="M26 12c20 2 20 24-6 26-8 1-10 2-15 2 13-3 21-8 25-14 2-5 2-9-4-14z" fill="url(#wg)"/><path d="M12 28c2-8 10-13 18-12-4 5-10 8-18 12z" fill="#1a5f9e"/></svg>
  <div><div class="wm-a">极光下载站</div><div class="wm-b">www.xz7.com</div></div>
</div>
</body>
</html>
